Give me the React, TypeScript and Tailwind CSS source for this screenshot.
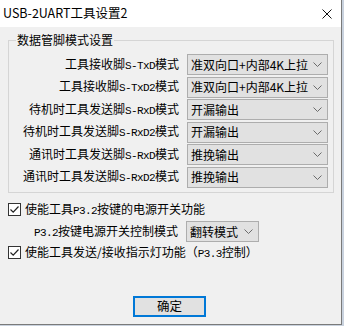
import React from "react"

const cjk = "font-['Noto_Sans_CJK_SC',sans-serif]"

const rows = [
  { label: "工具接收脚S-TxD模式", value: "准双向口+内部4K上拉" },
  { label: "工具接收脚S-TxD2模式", value: "准双向口+内部4K上拉" },
  { label: "待机时工具发送脚S-RxD模式", value: "开漏输出" },
  { label: "待机时工具发送脚S-RxD2模式", value: "开漏输出" },
  { label: "通讯时工具发送脚S-RxD模式", value: "推挽输出" },
  { label: "通讯时工具发送脚S-RxD2模式", value: "推挽输出" },
]

// latin runs are drawn in a narrow mono face, like the half-width glyphs of the original
const Mixed = ({ text }: { text: string }) => {
  const parts = text.split(/([A-Za-z0-9.\-]+)/)
  return (
    <>
      {parts.map((p, i) =>
        i % 2 === 1 ? (
          <span key={i} className="font-['Liberation_Mono',monospace] text-[11px] tracking-[-0.6px]">
            {p}
          </span>
        ) : (
          <span key={i}>{p}</span>
        )
      )}
    </>
  )
}

const Chevron = () => (
  <svg width="9" height="5" viewBox="0 0 9 5" className="shrink-0">
    <path d="M0.5 0.5 L4.5 4.5 L8.5 0.5" fill="none" stroke="#6b6b6b" strokeWidth="1" />
  </svg>
)

const Combo = ({ value, width }: { value: string; width: string }) => (
  <div
    className={`${width} h-[21px] bg-[#e1e1e1] border border-[#adadad] flex items-center justify-between pl-[3px] pr-[5px] text-[12px] leading-none text-black`}
  >
    <span className="whitespace-nowrap">{value}</span>
    <Chevron />
  </div>
)

const Check = () => (
  <div className="w-[13px] h-[13px] bg-white border border-[#333] flex items-center justify-center shrink-0">
    <svg width="11" height="11" viewBox="0 0 11 11">
      <path d="M1.5 5.5 L4.2 8.2 L9.5 2.5" fill="none" stroke="#222" strokeWidth="1.2" />
    </svg>
  </div>
)

export default function App() {
  return (
    <div className={`w-[344px] h-[326px] bg-[#c9d2de] ${cjk} text-[12px] text-black`}>
      <div className="w-[342px] h-[325px] bg-[#f0f0f0] border-r border-b border-[#7a7a7a] flex flex-col">
        <div className="h-[27px] bg-white flex items-center justify-between pl-[3px] pr-[9px] shrink-0">
          <span className="text-[12.5px]">USB-2UART工具设置2</span>
          <svg width="10" height="10" viewBox="0 0 10 10">
            <path d="M0.5 0.5 L9.5 9.5 M9.5 0.5 L0.5 9.5" stroke="#111" strokeWidth="1" />
          </svg>
        </div>

        <fieldset className="mt-[5px] ml-[8px] w-[326px] border border-[#d5d5d5] px-0 pt-[6px] pb-[4px] pr-[5px]">
          <legend className="ml-[7px] px-[1px] leading-[16px]">数据管脚模式设置</legend>
          <div className="grid grid-cols-[1fr_141px] gap-x-2 gap-y-[1.6px] items-center">
            {rows.map((r, i) => (
              <React.Fragment key={i}>
                <div className="text-right whitespace-nowrap leading-none">
                  <Mixed text={r.label} />
                </div>
                <Combo value={r.value} width="w-[141px]" />
              </React.Fragment>
            ))}
          </div>
        </fieldset>

        <div className="mt-[9px] ml-[8px] h-[16px] flex items-center gap-[4px]">
          <Check />
          <span className="whitespace-nowrap">
            <Mixed text="使能工具P3.2按键的电源开关功能" />
          </span>
        </div>

        <div className="mt-[3px] h-[22px] flex items-center">
          <div className="w-[178px] text-right whitespace-nowrap">
            <Mixed text="P3.2按键电源开关控制模式" />
          </div>
          <div className="ml-[8px]">
            <Combo value="翻转模式" width="w-[73px]" />
          </div>
        </div>

        <div className="mt-[2px] ml-[8px] h-[16px] flex items-center gap-[4px]">
          <Check />
          <span className="whitespace-nowrap">
            使能工具发送/接收指示灯功能（<Mixed text="P3.3" />控制）
          </span>
        </div>

        <button className="mt-[35px] ml-[133px] w-[73px] h-[21px] bg-[#e1e1e1] border-2 border-[#0078d7] text-[12.5px] leading-none flex items-center justify-center">
          确定
        </button>
      </div>
    </div>
  )
}
